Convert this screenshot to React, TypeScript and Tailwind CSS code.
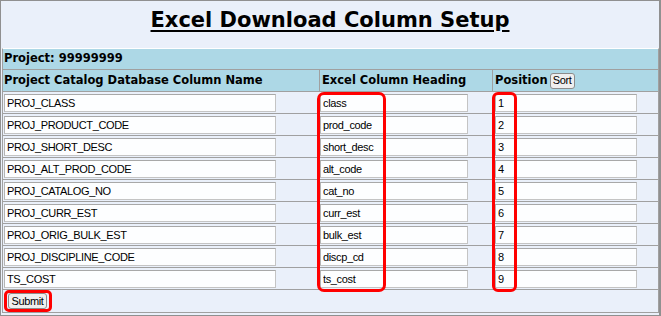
import React from "react";

const rows: [string, string, string][] = [
  ["PROJ_CLASS", "class", "1"],
  ["PROJ_PRODUCT_CODE", "prod_code", "2"],
  ["PROJ_SHORT_DESC", "short_desc", "3"],
  ["PROJ_ALT_PROD_CODE", "alt_code", "4"],
  ["PROJ_CATALOG_NO", "cat_no", "5"],
  ["PROJ_CURR_EST", "curr_est", "6"],
  ["PROJ_ORIG_BULK_EST", "bulk_est", "7"],
  ["PROJ_DISCIPLINE_CODE", "discp_cd", "8"],
  ["TS_COST", "ts_cost", "9"],
];

const inputCls =
  "h-[18px] bg-[#fdfeff] border border-[#c4c4c4] border-t-[#a8a8a8] border-l-[#b4b4b4] px-[2px] text-[11px] tracking-[-0.35px] text-black outline-none [font-family:'Liberation_Sans',Arial,sans-serif]";

export default function App() {
  return (
    <div className="relative w-[661px] h-[316px] bg-[#eaf0fa] border-l border-t border-b border-r-2 border-[#909090] flex flex-col overflow-hidden">
      {/* Title */}
      <div className="h-[47px] pt-[7px] flex justify-center">
        <h1 className="text-[21px] leading-[24px] font-bold underline decoration-2 underline-offset-[3px] text-black [font-family:'DejaVu_Sans',Verdana,sans-serif]">
          Excel Download Column Setup
        </h1>
      </div>

      {/* Table */}
      <div className="ml-[1px] w-[657px] border-t border-t-white border-l border-r border-b border-[#a0a0a0] flex flex-col [font-family:'DejaVu_Sans',Verdana,sans-serif]">
        <div className="h-[20px] bg-[#add8e6] flex items-center pl-[1px] text-[11.5px] font-bold text-black">
          Project: 99999999
        </div>
        <div className="h-[22px] border-t border-[#a0a0a0] bg-[#add8e6] grid grid-cols-[316px_173px_166px] text-[11.5px] font-bold text-black">
          <div className="flex items-center pl-[1px]">Project Catalog Database Column Name</div>
          <div className="flex items-center pl-[2px] border-l border-[#a0a0a0]">Excel Column Heading</div>
          <div className="flex items-center pl-[2px] border-l border-[#a0a0a0] gap-[2px]">
            <span>Position</span>
            <button className="h-[16px] w-[25px] bg-[#efefef] border border-[#8c8c8c] rounded-[3px] text-[11px] leading-none text-black font-normal tracking-[-0.3px] [font-family:'Liberation_Sans',Arial,sans-serif]">
              Sort
            </button>
          </div>
        </div>
        {rows.map(([a, b, c]) => (
          <div
            key={a}
            className="h-[22px] border-t border-[#a0a0a0] grid grid-cols-[316px_173px_166px]"
          >
            <div className="flex items-center pl-[1px]">
              <input readOnly value={a} className={`${inputCls} w-[272px]`} />
            </div>
            <div className="flex items-center pl-[1px]">
              <input readOnly value={b} className={`${inputCls} w-[148px]`} />
            </div>
            <div className="flex items-center pl-[3px]">
              <input readOnly value={c} className={`${inputCls} w-[142px]`} />
            </div>
          </div>
        ))}
        <div className="h-[23px] border-t border-[#a0a0a0] flex items-center pl-[5px]">
          <button className="h-[16px] w-[39px] bg-[#efefef] border border-[#8c8c8c] rounded-[3px] text-[11px] leading-none text-black tracking-[-0.35px] [font-family:'Liberation_Sans',Arial,sans-serif]">
            Submit
          </button>
        </div>
      </div>

      {/* Red highlight annotations */}
      <div className="absolute left-[316px] top-[91px] w-[69px] h-[200px] border-[3px] border-[#ff0000] rounded-[7px] pointer-events-none" />
      <div className="absolute left-[491px] top-[91px] w-[25px] h-[200px] border-[3px] border-[#ff0000] rounded-[6px] pointer-events-none" />
      <div className="absolute left-[3px] top-[289px] w-[48px] h-[22px] border-[3px] border-[#ff0000] rounded-[5px] pointer-events-none" />
    </div>
  );
}
